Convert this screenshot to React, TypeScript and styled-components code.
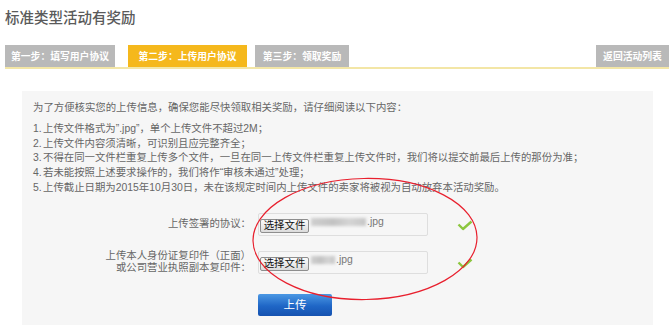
import styled, { createGlobalStyle } from "styled-components";

const GlobalStyle = createGlobalStyle`
  html, body {
    margin: 0;
    padding: 0;
    background: #ffffff;
  }
  body {
    font-family: "Liberation Sans", "Noto Sans CJK SC", sans-serif;
  }
`;

const steps = [
  { label: "第一步：填写用户协议", active: false, width: 110, gap: 13 },
  { label: "第二步：上传用户协议", active: true, width: 119, gap: 8 },
  { label: "第三步：领取奖励", active: false, width: 94, gap: 0 },
];

const rules = [
  "上传文件格式为”.jpg”，单个上传文件不超过2M；",
  "上传文件内容须清晰，可识别且应完整齐全；",
  "不得在同一文件栏重复上传多个文件，一旦在同一上传文件栏重复上传文件时，我们将以提交前最后上传的那份为准；",
  "若未能按照上述要求操作的，我们将作“审核未通过”处理；",
  "上传截止日期为2015年10月30日，未在该规定时间内上传文件的卖家将被视为自动放弃本活动奖励。",
];

const Check = () => (
  <svg width="16" height="11" viewBox="0 0 16 11">
    <polyline
      points="1.5,4.5 6,9 14.5,1.5"
      fill="none"
      stroke="#8cc63f"
      strokeWidth="2.4"
      strokeLinejoin="round"
    />
  </svg>
);

const App: React.FC = () => {
  return (
    <Page>
      <GlobalStyle />
      <Title>标准类型活动有奖励</Title>
      <TabBar>
        {steps.map((s) => (
          <Tab key={s.label} $active={s.active} $width={s.width} $gap={s.gap}>
            {s.label}
          </Tab>
        ))}
        <BackButton>返回活动列表</BackButton>
      </TabBar>
      <Panel>
        <Intro>为了方便核实您的上传信息，确保您能尽快领取相关奖励，请仔细阅读以下内容：</Intro>
        <RuleList>
          {rules.map((r, i) => (
            <Rule key={i}>
              <RuleNo>{i + 1}.</RuleNo>
              {r}
            </Rule>
          ))}
        </RuleList>
        <Form>
          <Label>上传签署的协议：</Label>
          <FileBox>
            <ChooseButton>选择文件</ChooseButton>
            <Blurred $width={55} />
            <FileExt>.jpg</FileExt>
          </FileBox>
          <CheckCell>
            <Check />
          </CheckCell>

          <Label>
            上传本人身份证复印件（正面）
            <br />
            或公司营业执照副本复印件：
          </Label>
          <FileBox>
            <ChooseButton>选择文件</ChooseButton>
            <Blurred $width={24} />
            <FileExt>.jpg</FileExt>
          </FileBox>
          <CheckCell>
            <Check />
          </CheckCell>
        </Form>
        <UploadButton>上传</UploadButton>
      </Panel>
      <Ellipse width="228" height="126" viewBox="0 0 228 126">
        <ellipse
          cx="114"
          cy="62"
          rx="112"
          ry="60.5"
          fill="none"
          stroke="#e8202e"
          strokeWidth="1.2"
          transform="rotate(-1 114 62)"
        />
      </Ellipse>
    </Page>
  );
};
export default App;

const Page = styled.div`
  position: relative;
  width: 672px;
  height: 325px;
  overflow: hidden;
  padding: 0 0 0 5px;
  box-sizing: border-box;
`;

const Title = styled.div`
  padding-top: 9px;
  height: 45px;
  box-sizing: border-box;
  font-size: 14.5px;
  line-height: 18px;
  font-weight: 500;
  color: #5a5a5a;
`;

const TabBar = styled.div`
  display: flex;
  align-items: flex-end;
  width: 664px;
  height: 22px;
  border-bottom: 2px solid #f3e6a6;
`;

const Tab = styled.div<{ $active: boolean; $width: number; $gap: number }>`
  width: ${(p) => p.$width}px;
  height: 22px;
  margin-right: ${(p) => p.$gap}px;
  display: flex;
  align-items: center;
  justify-content: center;
  background: ${(p) => (p.$active ? "#f5b81c" : "#b9b9b9")};
  color: #ffffff;
  font-size: 9.8px;
  font-weight: bold;
  white-space: nowrap;
`;

const BackButton = styled.div`
  margin-left: auto;
  width: 73px;
  height: 22px;
  display: flex;
  align-items: center;
  justify-content: center;
  background: #b9b9b9;
  color: #ffffff;
  font-size: 9.8px;
  font-weight: bold;
`;

const Panel = styled.div`
  margin: 22px 0 0 17px;
  width: 631px;
  height: 240px;
  box-sizing: border-box;
  padding: 9px 11px;
  background: #f6f6f6;
  color: #666666;
  font-size: 10.4px;
`;

const Intro = styled.div`
  line-height: 16px;
  white-space: nowrap;
`;

const RuleList = styled.div`
  margin-top: 6px;
`;

const Rule = styled.div`
  display: flex;
  line-height: 14.7px;
  white-space: nowrap;
`;

const RuleNo = styled.span`
  width: 10px;
`;

const Form = styled.div`
  margin-top: 17px;
  display: grid;
  grid-template-columns: 218px 170px auto;
  column-gap: 7px;
  row-gap: 14px;
  align-items: center;
`;

const Label = styled.div`
  text-align: right;
  line-height: 12.5px;
  white-space: nowrap;
`;

const FileBox = styled.div`
  height: 23px;
  box-sizing: border-box;
  border: 1px solid #dedede;
  border-radius: 2px;
  background: #f6f6f6;
  display: flex;
  align-items: flex-start;
  padding: 3px 0 0 1px;
`;

const ChooseButton = styled.div`
  width: 49px;
  height: 14px;
  margin-top: 2px;
  box-sizing: border-box;
  border: 1px solid #8e8e8e;
  border-radius: 2px;
  background: linear-gradient(#fbfbfb, #dcdcdc);
  color: #111111;
  font-size: 10.4px;
  line-height: 12px;
  text-align: center;
`;

const Blurred = styled.div<{ $width: number }>`
  width: ${(p) => p.$width}px;
  height: 8px;
  margin: 1px 1px 0 2px;
  background: linear-gradient(90deg, #cfcfcf, #c2c2c2 40%, #d4d4d4 70%, #c6c6c6);
  filter: blur(1.5px);
`;

const FileExt = styled.span`
  font-size: 10.4px;
  line-height: 10px;
  color: #777777;
`;

const CheckCell = styled.div`
  padding-left: 22px;
  padding-top: 3px;
  display: flex;
`;

const UploadButton = styled.div`
  margin: 19px 0 0 225px;
  width: 74px;
  height: 22px;
  border-radius: 2px;
  background: linear-gradient(#4b98e4, #1f66c6 55%, #1552b0);
  color: #ffffff;
  font-size: 11.5px;
  line-height: 22px;
  text-align: center;
`;

const Ellipse = styled.svg`
  position: absolute;
  left: 251px;
  top: 177px;
  pointer-events: none;
`;
